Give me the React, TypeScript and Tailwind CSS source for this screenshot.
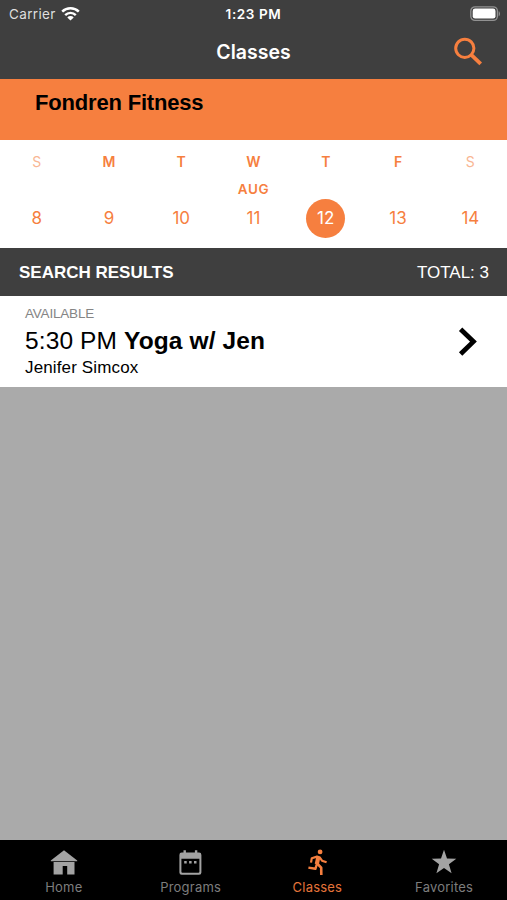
import type { ReactNode } from "react";
import clsx from "clsx";

const days = [
  { name: "S", date: 8, weekend: true },
  { name: "M", date: 9 },
  { name: "T", date: 10 },
  { name: "W", date: 11, month: "AUG" },
  { name: "T", date: 12, selected: true },
  { name: "F", date: 13 },
  { name: "S", date: 14, weekend: true },
];

function WifiIcon() {
  return (
    <svg width="19" height="15" viewBox="0 0 19 15" fill="none" stroke="#fff">
      <path d="M1.2 4.7a11.8 11.8 0 0 1 16.6 0" strokeWidth="2.5" />
      <path d="M4.2 8.1a7.5 7.5 0 0 1 10.6 0" strokeWidth="2.4" />
      <path d="M6.3 10.4a4.5 4.5 0 0 1 6.4 0L9.5 13.6z" fill="#fff" stroke="none" />
    </svg>
  );
}

function BatteryIcon() {
  return (
    <svg width="31" height="16" viewBox="0 0 31 16">
      <rect x="0.8" y="0.8" width="26.6" height="13.6" rx="4.2" fill="none" stroke="#929292" strokeWidth="1.3" />
      <rect x="2.7" y="2.6" width="22.8" height="10" rx="2.4" fill="#fff" />
      <path d="M28.7 5.2c1.7.6 1.7 4.4 0 5z" fill="#929292" />
    </svg>
  );
}

function SearchIcon() {
  return (
    <svg width="30" height="30" viewBox="0 0 30 30" fill="none" stroke="#f67f3f">
      <circle cx="11.8" cy="11.3" r="9.1" strokeWidth="3" />
      <path d="m18.3 17.8 9.4 9.1" strokeWidth="3.8" />
    </svg>
  );
}

function HomeIcon() {
  return (
    <svg className="ml-[2px]" width="28" height="28" viewBox="0 0 28 28" fill="currentColor">
      <path d="M14 2.2 27.2 12.6V13.3H.8v-.7z" />
      <path d="M3.6 14h20.9v12.5h-7.3v-8.4h-4.5v8.4H3.6z" />
    </svg>
  );
}

function CalendarIcon() {
  return (
    <svg width="28" height="28" viewBox="0 0 28 28" fill="currentColor">
      <path
        fillRule="evenodd"
        d="M7.5 2.2h2.4v2.4h9V2.2h2.4v2.4h1.8a2.3 2.3 0 0 1 2.3 2.3v17.5a2.3 2.3 0 0 1-2.3 2.3H5.7a2.3 2.3 0 0 1-2.3-2.3V6.9a2.3 2.3 0 0 1 2.3-2.3h1.8zM5.4 10.8v13a.9.9 0 0 0 .9.9h16.2a.9.9 0 0 0 .9-.9v-13z"
      />
      <path d="M8.2 13.1h2.5v2.4H8.2zM13.1 13.1h2.5v2.4h-2.5zM18 13.1h2.5v2.4H18z" />
    </svg>
  );
}

function RunIcon() {
  return (
    <svg width="28" height="28" viewBox="0 0 28 28" fill="none" stroke="currentColor" strokeLinejoin="round">
      <circle cx="17.1" cy="3.9" r="2.4" fill="currentColor" stroke="none" />
      <path d="M15.2 9.6 13.8 16.2" strokeWidth="4.2" />
      <path d="M8 14.6 8.8 10.2 14 8.6 16.5 9.2 19 12.7 23.6 14.3" strokeWidth="2.2" />
      <path d="M14.2 15.2 12.4 20.8 5.4 19.6" strokeWidth="2.4" />
      <path d="m14.6 16 3.6 3.6.1 7.4" strokeWidth="2.6" />
    </svg>
  );
}

function StarIcon() {
  return (
    <svg width="28" height="28" viewBox="0 0 28 28" fill="currentColor">
      <path d="m14 1.8 3 8.7 9.3.2-7.4 5.6 2.7 9L14 20l-7.6 5.3 2.7-9-7.4-5.6 9.3-.2z" />
    </svg>
  );
}

function Tab({ icon, label, active }: { icon: ReactNode; label: string; active?: boolean }) {
  return (
    <div
      className={clsx(
        "flex flex-1 flex-col items-center pt-2",
        active ? "text-[#f67f3f]" : "text-[#a3a3a3]"
      )}
    >
      <div className="flex h-7 items-center">{icon}</div>
      <span
        className={clsx(
          "mt-[3px] ml-[1px] text-[13px] leading-4 tracking-[0.22px]",
          active ? "text-[#e4743a]" : "text-[#7d7d7d]"
        )}
      >
        {label}
      </span>
    </div>
  );
}

function Header() {
  return (
    <header className="h-[79px] bg-[#3f3f3f] text-white">
      <div className="flex h-7 items-center justify-between pr-[6px] pl-[9px]">
        <div className="flex flex-1 items-center gap-[5px]">
          <span className="text-[13.5px] tracking-[0.35px] text-[#dedede]">Carrier</span>
          <WifiIcon />
        </div>
        <span className="pr-[3px] text-[13.5px] font-semibold tracking-[0.6px]">1:23 PM</span>
        <div className="flex flex-1 justify-end">
          <BatteryIcon />
        </div>
      </div>
      <div className="flex h-12 items-center px-6">
        <div className="flex-1" />
        <h1 className="pt-[2px] text-[19.5px] font-semibold">Classes</h1>
        <div className="flex flex-1 justify-end">
          <SearchIcon />
        </div>
      </div>
    </header>
  );
}

function Week() {
  return (
    <section className="flex h-[108px] bg-white px-[0.5px] text-[#f67f3f]">
      {days.map((day) => (
        <div key={day.date} className="flex flex-1 flex-col items-center pt-[13px]">
          <span
            className={clsx(
              "h-[18px] text-[14px] leading-[18px]",
              day.weekend ? "text-[#f9b693]" : "font-semibold"
            )}
          >
            {day.name}
          </span>
          <span className="mt-[9px] h-[18px] text-[13.5px] leading-[18px] font-semibold tracking-[0.6px]">
            {day.month}
          </span>
          <span
            className={clsx(
              "mt-[0.5px] flex size-[39px] items-center justify-center rounded-full pt-px text-[17px]",
              day.selected && "bg-[#f67f3f] text-white"
            )}
          >
            {day.date}
          </span>
        </div>
      ))}
    </section>
  );
}

function ClassRow() {
  return (
    <div className="flex h-[91px] items-center justify-between bg-white pr-[28px] pl-[25px] font-['Liberation_Sans',Arial,sans-serif] text-black">
      <div>
        <p className="text-[13.5px] leading-[18px] tracking-[-0.2px] text-[#858585]">AVAILABLE</p>
        <p className="mt-1 text-[24.5px] leading-7 tracking-[0.12px]">
          5:30 PM <b>Yoga w/ Jen</b>
        </p>
        <p className="mt-[3px] text-[17px] leading-5 tracking-[0.14px]">Jenifer Simcox</p>
      </div>
      <svg width="21" height="30" viewBox="0 0 21 30" fill="none" stroke="#000" strokeWidth="4.8">
        <path d="M2.6 2.2 15.4 14.6 2.6 27" />
      </svg>
    </div>
  );
}

function App() {
  return (
    <div className="flex h-[900px] w-[507px] flex-col overflow-hidden bg-[#aaaaaa] font-[Inter,sans-serif]">
      <Header />
      <div className="h-[61px] bg-[#f67f3f] pt-[10px] pl-[35px] font-['Liberation_Sans',Arial,sans-serif] text-[22px] leading-7 font-bold tracking-[-0.18px] text-black">
        Fondren Fitness
      </div>
      <Week />
      <div className="flex h-12 items-center justify-between bg-[#3f3f3f] pt-[2px] pr-[18px] pl-[19px] font-['Liberation_Sans',Arial,sans-serif] text-[17px] text-white">
        <b>SEARCH RESULTS</b>
        <span>TOTAL: 3</span>
      </div>
      <ClassRow />
      <nav className="mt-auto flex h-[60px] bg-black">
        <Tab icon={<HomeIcon />} label="Home" />
        <Tab icon={<CalendarIcon />} label="Programs" />
        <Tab icon={<RunIcon />} label="Classes" active />
        <Tab icon={<StarIcon />} label="Favorites" />
      </nav>
    </div>
  );
}

export default App;
